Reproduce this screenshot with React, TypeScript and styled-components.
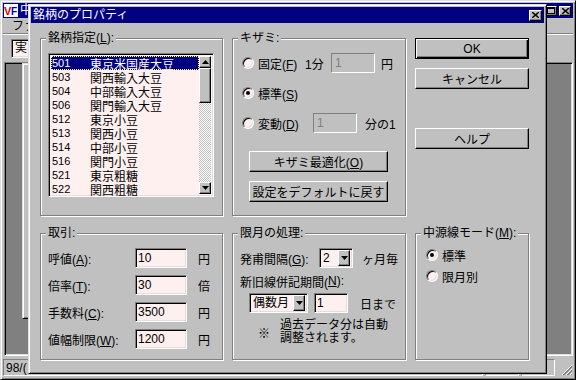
import React from "react";
import styled, { createGlobalStyle, css } from "styled-components";

const GlobalStyle = createGlobalStyle`
  html, body {
    margin: 0;
    padding: 0;
    background: #c0c0c0;
  }
  body {
    font-family: "Liberation Sans", "Noto Sans CJK JP", sans-serif;
    font-size: 12px;
    color: #000;
  }
  * {
    box-sizing: border-box;
  }
`;

const windowFrame = css`
  border: 1px solid;
  border-color: #dfdfdf #000 #000 #dfdfdf;
  box-shadow: inset 1px 1px #fff, inset -1px -1px #808080;
`;

const raisedSmall = css`
  border: 1px solid;
  border-color: #fff #000 #000 #fff;
  box-shadow: inset -1px -1px #808080;
  background: #c0c0c0;
`;

const sunken = css`
  border: 1px solid;
  border-color: #808080 #fff #fff #808080;
  box-shadow: inset 1px 1px #000, inset -1px -1px #dfdfdf;
`;

const Desktop = styled.div`
  position: relative;
  width: 576px;
  height: 380px;
  overflow: hidden;
`;

/* ---------- parent application window ---------- */

const MainWindow = styled.div`
  width: 576px;
  height: 380px;
  display: flex;
  flex-direction: column;
  background: #c0c0c0;
  padding: 2px;
  ${windowFrame};
`;

const MainTitle = styled.div`
  height: 15px;
  display: flex;
  align-items: center;
  background: #000080;
  color: #fff;
  padding: 0 2px 0 1px;
  line-height: 15px;
`;

const AppIcon = styled.svg`
  flex: none;
  margin-right: 2px;
`;

const MainCaption = styled.span`
  flex: 1;
`;

const CaptionButton = styled.span`
  width: 12px;
  height: 10px;
  display: flex;
  align-items: center;
  justify-content: center;
  margin-left: 2px;
  ${raisedSmall};
`;

const MenuBar = styled.div`
  height: 16px;
  padding-left: 9px;
  line-height: 16px;
  border-bottom: 1px solid #808080;
  box-shadow: 0 1px #fff;
`;

const Toolbar = styled.div`
  height: 27px;
  padding: 4px 8px 0;
  margin-top: 1px;
`;

const ToolField = styled.div`
  width: 40px;
  height: 19px;
  padding-left: 3px;
  line-height: 17px;
  background: #fff0f0;
  ${sunken};
`;

const MdiClient = styled.div`
  position: relative;
  flex: 1;
  margin: 0 0 1px 1px;
  background: #808080;
  overflow: hidden;
  ${sunken};
`;

const ChildWindow = styled.div`
  position: absolute;
  left: 17px;
  top: 0;
  width: 420px;
  height: 256px;
  background: #c0c0c0;
  ${windowFrame};
`;

const StatusBar = styled.div`
  height: 20px;
  display: flex;
  align-items: stretch;
  gap: 2px;
  padding: 2px 0 1px;
`;

const StatusPanel = styled.div<{ $w: number }>`
  width: ${(p) => p.$w}px;
  flex: none;
  padding-left: 2px;
  line-height: 16px;
  border: 1px solid;
  border-color: #808080 #fff #fff #808080;
`;

const SizeGrip = styled.svg`
  margin-left: auto;
  align-self: flex-end;
`;

/* ---------- dialog ---------- */

const Dialog = styled.div`
  position: absolute;
  left: 28px;
  top: 4px;
  width: 519px;
  height: 370px;
  display: flex;
  flex-direction: column;
  background: #c0c0c0;
  padding: 2px;
  ${windowFrame};
`;

const DialogTitle = styled.div`
  height: 16px;
  display: flex;
  align-items: center;
  background: #000080;
  color: #fff;
  padding: 0 2px;
  line-height: 16px;
`;

const DialogCaption = styled.span`
  flex: 1;
`;

const CloseButton = styled.span`
  width: 13px;
  height: 11px;
  display: flex;
  align-items: center;
  justify-content: center;
  ${raisedSmall};
`;

const DialogBody = styled.div`
  display: grid;
  grid-template-columns: 183px 174px 114px;
  grid-template-rows: 184px 133px;
  column-gap: 9px;
  row-gap: 11px;
  padding: 9px 0 0 9px;
`;

const Group = styled.fieldset`
  margin: 0;
  min-width: 0;
  padding: 9px 7px 0 7px;
  border: 1px solid #808080;
  box-shadow: inset 1px 1px #fff, 1px 1px #fff;
`;

const Legend = styled.legend`
  padding: 0 2px;
  margin-left: -2px;
  line-height: 12px;
  font-size: 12px;
  background: #c0c0c0;
`;

/* list box */

const ListBox = styled.div`
  width: 166px;
  height: 144px;
  display: flex;
  padding: 2px;
  background: #fff0f0;
  ${sunken};
`;

const ListItems = styled.div`
  width: 150px;
  display: flex;
  flex-direction: column;
`;

const ListItem = styled.div<{ $selected?: boolean }>`
  height: 14px;
  display: flex;
  align-items: center;
  padding-left: 1px;
  white-space: nowrap;
  ${(p) =>
    p.$selected &&
    css`
      background: #000080;
      color: #fff;
      outline: 1px dotted #ffff7f;
      outline-offset: -1px;
    `}
`;

const ItemCode = styled.span`
  width: 38px;
  flex: none;
  font-size: 11px;
`;

const ScrollBar = styled.div`
  width: 12px;
  display: flex;
  flex-direction: column;
  background: repeating-conic-gradient(#c0c0c0 0% 25%, #fff 0% 50%) 0 0 / 2px 2px;
`;

const ScrollArrow = styled.div`
  height: 12px;
  display: flex;
  align-items: center;
  justify-content: center;
  ${raisedSmall};
`;

const ScrollThumb = styled.div`
  height: 35px;
  ${raisedSmall};
`;

const ScrollTrack = styled.div`
  flex: 1;
`;

/* generic controls */

const Column = styled.div<{ $indent?: number }>`
  display: flex;
  flex-direction: column;
  padding-left: ${(p) => p.$indent ?? 0}px;
`;

const Row = styled.div<{ $h?: number; $top?: number; $indent?: number }>`
  height: ${(p) => p.$h ?? 20}px;
  display: flex;
  align-items: center;
  margin-top: ${(p) => p.$top ?? 0}px;
  margin-left: ${(p) => p.$indent ?? 0}px;
  white-space: nowrap;
`;

const Cell = styled.span<{ $w?: number; $left?: number }>`
  flex: none;
  width: ${(p) => (p.$w ? `${p.$w}px` : "auto")};
  margin-left: ${(p) => p.$left ?? 0}px;
`;

const RadioOption = styled.label<{ $w?: number }>`
  display: flex;
  align-items: center;
  gap: 4px;
  flex: none;
  width: ${(p) => (p.$w ? `${p.$w}px` : "auto")};
`;

const RadioCircle = styled.span<{ $checked?: boolean }>`
  width: 12px;
  height: 12px;
  flex: none;
  border-radius: 50%;
  display: flex;
  align-items: center;
  justify-content: center;
  background: #fff0f0;
  border: 1px solid;
  border-color: #808080 #fff #fff #808080;
  box-shadow: inset 1px 1px #000, inset -1px -1px #dfdfdf;
  &::after {
    content: "";
    width: 4px;
    height: 4px;
    border-radius: 50%;
    background: ${(p) => (p.$checked ? "#000" : "transparent")};
  }
`;

const TextBox = styled.div<{ $w: number; $disabled?: boolean; $left?: number }>`
  width: ${(p) => p.$w}px;
  height: 20px;
  flex: none;
  margin-left: ${(p) => p.$left ?? 0}px;
  padding-left: 2px;
  line-height: 18px;
  font-size: 12px;
  ${(p) =>
    p.$disabled
      ? css`
          border: 1px solid;
          border-color: #808080 #fff #fff #808080;
          background: #c0c0c0;
          color: #808080;
          padding-left: 3px;
        `
      : css`
          ${sunken};
          background: #fff0f0;
        `}
`;

const Combo = styled.div<{ $w: number; $left?: number }>`
  width: ${(p) => p.$w}px;
  height: 20px;
  flex: none;
  display: flex;
  align-items: center;
  margin-left: ${(p) => p.$left ?? 0}px;
  padding: 2px 2px 2px 3px;
  background: #fff0f0;
  ${sunken};
`;

const ComboText = styled.span`
  flex: 1;
  line-height: 16px;
`;

const DropButton = styled.span`
  width: 12px;
  height: 16px;
  flex: none;
  display: flex;
  align-items: center;
  justify-content: center;
  ${raisedSmall};
`;

const PushButton = styled.button<{ $default?: boolean; $top?: number; $w?: number; $left?: number }>`
  width: ${(p) => (p.$w ? `${p.$w}px` : "100%")};
  height: 21px;
  margin: ${(p) => p.$top ?? 0}px 0 0 ${(p) => p.$left ?? 0}px;
  padding: 0;
  font: inherit;
  color: #000;
  background: #c0c0c0;
  ${(p) =>
    p.$default
      ? css`
          border: 1px solid #000;
          box-shadow: inset 1px 1px #fff, inset -1px -1px #000, inset -2px -2px #808080;
        `
      : css`
          border: 1px solid;
          border-color: #fff #000 #000 #fff;
          box-shadow: inset -1px -1px #808080;
        `}
`;

const Note = styled.div`
  line-height: 13px;
`;

const Radio: React.FC<{ label: React.ReactNode; checked?: boolean; w?: number }> = ({
  label,
  checked,
  w,
}) => (
  <RadioOption $w={w}>
    <RadioCircle $checked={checked} />
    <span>{label}</span>
  </RadioOption>
);

const Arrow: React.FC<{ up?: boolean }> = ({ up }) => (
  <svg width="7" height="4" viewBox="0 0 7 4">
    <polygon points={up ? "3.5,0 7,4 0,4" : "0,0 7,0 3.5,4"} fill="#000" />
  </svg>
);

const Cross: React.FC = () => (
  <svg width="7" height="6" viewBox="0 0 7 6">
    <path d="M0 0 L7 6 M7 0 L0 6" stroke="#000" strokeWidth="1.4" />
  </svg>
);

const items = [
  ["501", "東京米国産大豆"],
  ["503", "関西輸入大豆"],
  ["504", "中部輸入大豆"],
  ["506", "関門輸入大豆"],
  ["512", "東京小豆"],
  ["513", "関西小豆"],
  ["514", "中部小豆"],
  ["516", "関門小豆"],
  ["521", "東京粗糖"],
  ["522", "関西粗糖"],
];

const trades = [
  { label: "呼値", key: "A", value: "10", unit: "円" },
  { label: "倍率", key: "T", value: "30", unit: "倍" },
  { label: "手数料", key: "C", value: "3500", unit: "円" },
  { label: "値幅制限", key: "W", value: "1200", unit: "円" },
];

const App: React.FC = () => {
  return (
    <Desktop>
      <GlobalStyle />
      <MainWindow>
        <MainTitle>
          <AppIcon width="14" height="13" viewBox="0 0 14 13">
            <rect x="0" y="0" width="14" height="13" fill="#fff" />
            <text x="0" y="11" fontSize="11" fontWeight="bold" fill="#d00000" fontFamily="Liberation Sans">
              V
            </text>
            <text x="7" y="11" fontSize="10" fontWeight="bold" fill="#0000c0" fontFamily="Liberation Sans">
              F
            </text>
          </AppIcon>
          <MainCaption>中</MainCaption>
          <CaptionButton>
            <svg width="6" height="2" viewBox="0 0 6 2">
              <rect x="0" y="0" width="6" height="2" fill="#000" />
            </svg>
          </CaptionButton>
          <CaptionButton>
            <svg width="8" height="7" viewBox="0 0 8 7">
              <rect x="0.5" y="0.5" width="7" height="6" fill="none" stroke="#000" />
              <rect x="0" y="0" width="8" height="2" fill="#000" />
            </svg>
          </CaptionButton>
          <CaptionButton>
            <Cross />
          </CaptionButton>
        </MainTitle>
        <MenuBar>ファ</MenuBar>
        <Toolbar>
          <ToolField>実</ToolField>
        </Toolbar>
        <MdiClient>
          <ChildWindow />
        </MdiClient>
        <StatusBar>
          <StatusPanel $w={480}>98/(</StatusPanel>
          <StatusPanel $w={34} />
          <StatusPanel $w={34} />
          <SizeGrip width="12" height="12" viewBox="0 0 12 12">
            <path d="M11 1 L1 11 M11 5 L5 11 M11 9 L9 11" stroke="#fff" strokeWidth="1" />
            <path d="M11 2 L2 11 M11 3 L3 11 M11 6 L6 11 M11 7 L7 11 M11 10 L10 11" stroke="#808080" strokeWidth="1" />
          </SizeGrip>
        </StatusBar>
      </MainWindow>

      <Dialog>
        <DialogTitle>
          <DialogCaption>銘柄のプロパティ</DialogCaption>
          <CloseButton>
            <Cross />
          </CloseButton>
        </DialogTitle>
        <DialogBody>
          <Group>
            <Legend>
              銘柄指定(<u>L</u>):
            </Legend>
            <ListBox>
              <ListItems>
                {items.map(([code, name], i) => (
                  <ListItem key={code} $selected={i === 0}>
                    <ItemCode>{code}</ItemCode>
                    <span>{name}</span>
                  </ListItem>
                ))}
              </ListItems>
              <ScrollBar>
                <ScrollArrow>
                  <Arrow up />
                </ScrollArrow>
                <ScrollThumb />
                <ScrollTrack />
                <ScrollArrow>
                  <Arrow />
                </ScrollArrow>
              </ScrollBar>
            </ListBox>
          </Group>

          <Group>
            <Legend>キザミ:</Legend>
            <Column $indent={2}>
              <Row>
                <Radio
                  w={63}
                  label={
                    <>
                      固定(<u>F</u>)
                    </>
                  }
                />
                <Cell $w={26}>1分</Cell>
                <TextBox $w={44} $disabled>
                  1
                </TextBox>
                <Cell $left={6}>円</Cell>
              </Row>
              <Row $top={10}>
                <Radio
                  checked
                  label={
                    <>
                      標準(<u>S</u>)
                    </>
                  }
                />
              </Row>
              <Row $top={10}>
                <Radio
                  w={71}
                  label={
                    <>
                      変動(<u>D</u>)
                    </>
                  }
                />
                <TextBox $w={44} $disabled>
                  1
                </TextBox>
                <Cell $left={8}>分の1</Cell>
              </Row>
              <PushButton $w={139} $left={7} $top={18}>
                キザミ最適化(<u>O</u>)
              </PushButton>
              <PushButton $w={139} $left={7} $top={9}>
                設定をデフォルトに戻す
              </PushButton>
            </Column>
          </Group>

          <Column>
            <PushButton $default $top={6}>
              OK
            </PushButton>
            <PushButton $top={9}>キャンセル</PushButton>
            <PushButton $top={39}>ヘルプ</PushButton>
          </Column>

          <Group>
            <Legend>取引:</Legend>
            {trades.map((t, i) => (
              <Row key={t.key} $top={i === 0 ? 0 : 7}>
                <Cell $w={87}>
                  {t.label}(<u>{t.key}</u>):
                </Cell>
                <TextBox $w={52}>{t.value}</TextBox>
                <Cell $left={11}>{t.unit}</Cell>
              </Row>
            ))}
          </Group>

          <Group>
            <Legend>限月の処理:</Legend>
            <Row>
              <Cell $w={79}>
                発甫間隔(<u>G</u>):
              </Cell>
              <Combo $w={34}>
                <ComboText>2</ComboText>
                <DropButton>
                  <Arrow />
                </DropButton>
              </Combo>
              <Cell $left={9}>ヶ月毎</Cell>
            </Row>
            <Row $h={14} $top={6}>
              新旧線併記期間(<u>N</u>):
            </Row>
            <Row $top={5} $indent={9}>
              <Combo $w={59}>
                <ComboText>偶数月</ComboText>
                <DropButton>
                  <Arrow />
                </DropButton>
              </Combo>
              <TextBox $w={34} $left={6}>
                1
              </TextBox>
              <Cell $left={12}>日まで</Cell>
            </Row>
            <Row $h={26} $top={6} $indent={18}>
              <Cell $w={22}>※</Cell>
              <Note>
                過去データ分は自動
                <br />
                調整されます。
              </Note>
            </Row>
          </Group>

          <Group>
            <Legend>
              中源線モード(<u>M</u>):
            </Legend>
            <Column $indent={3}>
              <Row $h={14}>
                <Radio checked label="標準" />
              </Row>
              <Row $h={14} $top={7}>
                <Radio label="限月別" />
              </Row>
            </Column>
          </Group>
        </DialogBody>
      </Dialog>
    </Desktop>
  );
};

export default App;
